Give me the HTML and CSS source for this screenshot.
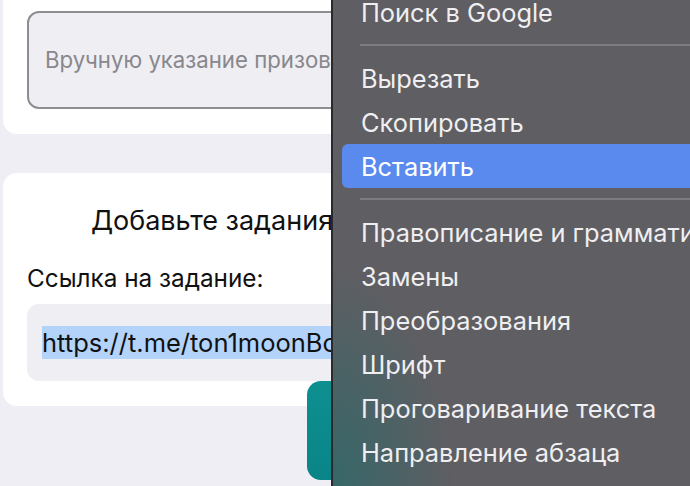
FILE: index.html
```html
<!DOCTYPE html>
<html lang="ru">
<head>
<meta charset="utf-8">
<link rel="stylesheet" href="styles.css">
</head>
<body>
<main class="page">
  <section class="card card-top">
    <div class="field field-bordered">
      <span class="placeholder">Вручную указание призов</span>
    </div>
  </section>
  <section class="card card-task">
    <h2 class="heading">Добавьте задания</h2>
    <label class="label">Ссылка на задание:</label>
    <div class="field field-flat">
      <span class="selected">https://t.me/ton1moonBot</span>
    </div>
  </section>
</main>
<div class="fab"></div>
<nav class="menu">
  <div class="item">Поиск в Google</div>
  <div class="sep"></div>
  <div class="item">Вырезать</div>
  <div class="item">Скопировать</div>
  <div class="item active">Вставить</div>
  <div class="sep"></div>
  <div class="item">Правописание и грамматика</div>
  <div class="item">Замены</div>
  <div class="item">Преобразования</div>
  <div class="item">Шрифт</div>
  <div class="item">Проговаривание текста</div>
  <div class="item">Направление абзаца</div>
</nav>
</body>
</html>
```
FILE: styles.css
```css
* { box-sizing: border-box; }
html, body { margin: 0; height: 100%; }
body {
  background: #efeef4;
  font-family: Inter, "Noto Sans", sans-serif;
  overflow: hidden;
  position: relative;
}
.page {
  display: flex;
  flex-direction: column;
  gap: 39px;
  padding-left: 3px;
  margin-top: -20px;
}
.card {
  background: #ffffff;
  border-radius: 14px;
  width: 418px;
  padding: 0 24px;
}
.card-top {
  padding-top: 31px;
  padding-bottom: 25px;
}
.field {
  width: 420px;
  border-radius: 12px;
  background: #efeef3;
  display: flex;
  align-items: center;
}
.field-bordered {
  height: 98px;
  border: 2px solid #8e8e92;
  padding-left: 16px;
}
.placeholder {
  font-size: 22.2px;
  color: #88878c;
  white-space: nowrap;
  margin-top: -2px;
}
.card-task {
  padding-top: 30px;
  padding-bottom: 25px;
}
.heading {
  margin: 0;
  font-weight: 400;
  font-size: 27px;
  color: #111;
  text-align: center;
  line-height: 36px;
  white-space: nowrap;
}
.label {
  display: block;
  margin-top: 24px;
  font-size: 24.3px;
  color: #111;
  line-height: 30px;
}
.field-flat {
  margin-top: 11px;
  height: 77px;
  padding-left: 15px;
}
.selected {
  font-size: 25.5px;
  color: #111;
  background: #b3d3fb;
  line-height: 33px;
  white-space: nowrap;
}
.fab {
  position: absolute;
  left: 307px;
  top: 381px;
  width: 120px;
  height: 99px;
  border-radius: 14px;
  background: linear-gradient(180deg, #0d8f90, #0a8587);
}
.menu {
  position: absolute;
  left: 331px;
  top: -10px;
  right: -20px;
  bottom: 0;
  border-left: 2px solid #2a292c;
  background:
    radial-gradient(ellipse 120px 220px at 0% 100%, rgba(20,110,110,0.55), rgba(20,110,110,0) 100%),
    #5f5e62;
  padding: 0 0 0 9px;
  display: flex;
  flex-direction: column;
}
.item {
  height: 44px;
  flex: none;
  display: flex;
  align-items: center;
  padding-left: 19px;
  font-size: 25.4px;
  color: #efeff1;
  white-space: nowrap;
  border-radius: 6px;
}
.item.active {
  background: #5a8aee;
  color: #ffffff;
}
.sep {
  height: 22px;
  flex: none;
  display: flex;
  align-items: center;
  margin-left: 18px;
}
.sep::before {
  content: "";
  flex: 1;
  height: 2px;
  background: #7c7b7f;
}
```
